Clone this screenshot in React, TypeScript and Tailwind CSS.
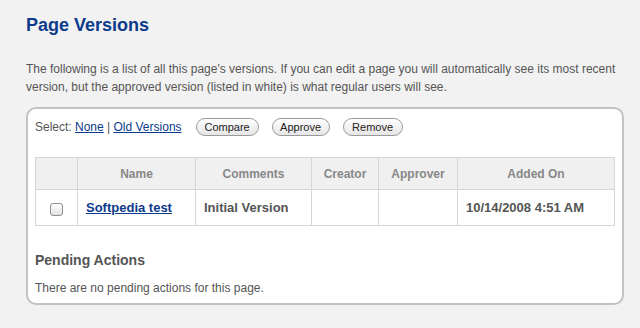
import React from "react";

const font = { fontFamily: '"Liberation Sans", Arial, Helvetica, sans-serif' };

function Btn({ children, w }: { children: React.ReactNode; w: string }) {
  return (
    <button
      className={`h-[18px] ${w} rounded-full border border-[#9a9a9a] bg-gradient-to-b from-white to-[#e6e6e6] text-[11px] leading-[16px] text-[#222] shadow-[inset_0_1px_0_#fff]`}
    >
      {children}
    </button>
  );
}

export default function App() {
  return (
    <div style={font} className="h-[328px] w-[640px] overflow-hidden bg-[#f2f2f2] pl-[26px] pr-[16px] pt-[14px]">
      <h1 className="text-[18px] font-bold leading-[22px] text-[#0c3b8c]">Page Versions</h1>
      <p className="mt-[24px] text-[12px] leading-[18px] text-[#555]">
        The following is a list of all this page's versions. If you can edit a page you will automatically see its most recent version, but the approved version (listed in white) is what regular users will see.
      </p>
      <div className="mt-[11px] h-[198px] w-[598px] rounded-[10px] border-2 border-[#c2c2c2] bg-white px-[7px] pt-[9px]">
        <div className="flex h-[18px] items-center text-[12px] text-[#555]">
          <span>Select:&nbsp;</span>
          <a className="text-[#0c3b8c] underline">None</a>
          <span>&nbsp;|&nbsp;</span>
          <a className="text-[#0c3b8c] underline">Old Versions</a>
          <div className="ml-[14px] flex gap-[13px]">
            <Btn w="w-[63px]">Compare</Btn>
            <Btn w="w-[58px]">Approve</Btn>
            <Btn w="w-[60px]">Remove</Btn>
          </div>
        </div>
        <table className="mt-[21px] w-[580px] border-collapse text-[12px]">
          <thead>
            <tr className="h-[32px] bg-[#f0f0f0] text-[#888]">
              <th className="w-[42px] border border-[#d6d6d6]"></th>
              <th className="w-[118px] border border-[#d6d6d6] font-bold">Name</th>
              <th className="w-[116px] border border-[#d6d6d6] font-bold">Comments</th>
              <th className="w-[67px] border border-[#d6d6d6] font-bold">Creator</th>
              <th className="w-[79px] border border-[#d6d6d6] font-bold">Approver</th>
              <th className="border border-[#d6d6d6] font-bold">Added On</th>
            </tr>
          </thead>
          <tbody>
            <tr className="h-[36px] text-[13px] font-bold text-[#555]">
              <td className="border border-[#d6d6d6] text-center align-middle">
                <span className="inline-block h-[13px] w-[13px] translate-y-[1px] rounded-[3px] border border-[#8e8e8e] bg-gradient-to-b from-white to-[#e2e2e2] align-middle"></span>
              </td>
              <td className="border border-[#d6d6d6] px-[8px]">
                <a className="text-[#0c3b8c] underline">Softpedia test</a>
              </td>
              <td className="border border-[#d6d6d6] px-[8px]">Initial Version</td>
              <td className="border border-[#d6d6d6] px-[8px]"></td>
              <td className="border border-[#d6d6d6] px-[8px]"></td>
              <td className="border border-[#d6d6d6] px-[8px]">10/14/2008 4:51 AM</td>
            </tr>
          </tbody>
        </table>
        <h2 className="mt-[25px] text-[14px] font-bold leading-[18px] text-[#555]">Pending Actions</h2>
        <p className="mt-[10px] text-[12px] leading-[18px] text-[#555]">There are no pending actions for this page.</p>
      </div>
    </div>
  );
}
